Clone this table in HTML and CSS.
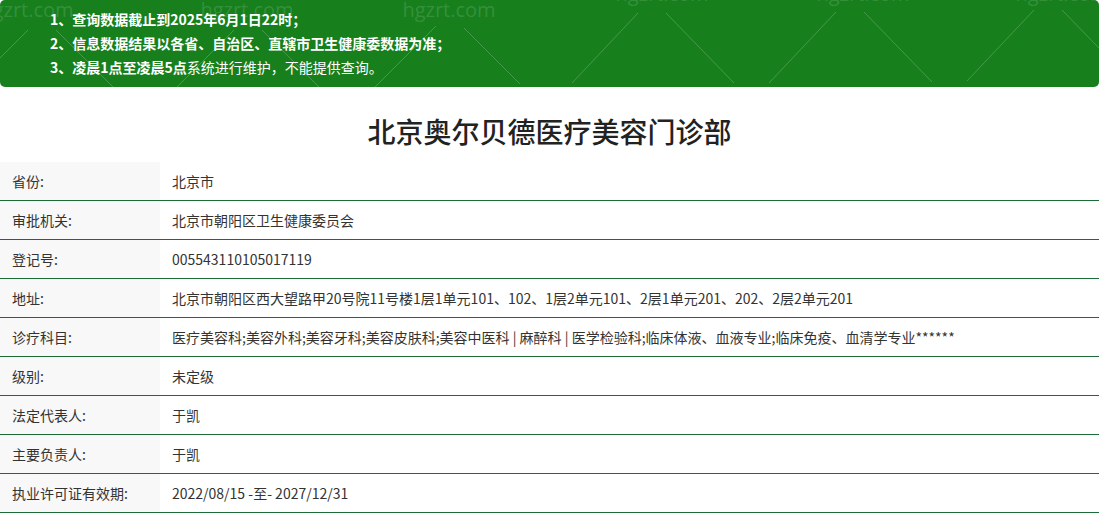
FILE: index.html
```html
<!DOCTYPE html>
<html lang="zh-CN">
<head>
    <meta charset="UTF-8">
    <meta name="viewport" content="width=device-width, initial-scale=1.0">
    <title>北京奥尔贝德医疗美容门诊部</title>
    <link rel="stylesheet" href="styles.css">
</head>
<body>
    <div class="page">
        <div class="notice">
            <svg class="watermark" width="1099" height="87" viewBox="0 0 1099 87" aria-hidden="true">
                <g class="wm-text">
                    <text x="27" y="17">hgzrt.com</text>
                    <text x="247" y="17">hgzrt.com</text>
                    <text x="449" y="17">hgzrt.com</text>
                    <text x="662" y="1">hgzrt.com</text>
                    <text x="863" y="1">hgzrt.com</text>
                    <text x="1062" y="1">hgzrt.com</text>
                </g>
                <g class="wm-lines">
                    <line x1="28" y1="30" x2="-42" y2="100"/>
                    <line x1="56" y1="30" x2="126" y2="100"/>
                    <line x1="234" y1="30" x2="164" y2="100"/>
                    <line x1="262" y1="30" x2="332" y2="100"/>
                    <line x1="436" y1="26" x2="366" y2="96"/>
                    <line x1="464" y1="28" x2="520" y2="84"/>
                    <line x1="638" y1="13" x2="572" y2="83"/>
                    <line x1="666" y1="13" x2="734" y2="83"/>
                    <line x1="836" y1="12" x2="769" y2="83"/>
                    <line x1="864" y1="12" x2="932" y2="82"/>
                    <line x1="1034" y1="10" x2="967" y2="81"/>
                    <line x1="1062" y1="10" x2="1130" y2="80"/>
                </g>
            </svg>
            <ul class="notice-list">
                <li>1、查询数据截止到2025年6月1日22时；</li>
                <li>2、信息数据结果以各省、自治区、直辖市卫生健康委数据为准；</li>
                <li>3、凌晨1点至凌晨5点<span class="plain">系统进行维护，不能提供查询。</span></li>
            </ul>
        </div>

        <h1 class="title">北京奥尔贝德医疗美容门诊部</h1>

        <table class="info">
            <tr><th>省份:</th><td>北京市</td></tr>
            <tr><th>审批机关:</th><td>北京市朝阳区卫生健康委员会</td></tr>
            <tr><th>登记号:</th><td>005543110105017119</td></tr>
            <tr><th>地址:</th><td>北京市朝阳区西大望路甲20号院11号楼1层1单元101、102、1层2单元101、2层1单元201、202、2层2单元201</td></tr>
            <tr><th>诊疗科目:</th><td>医疗美容科;美容外科;美容牙科;美容皮肤科;美容中医科 | 麻醉科 | 医学检验科;临床体液、血液专业;临床免疫、血清学专业******</td></tr>
            <tr><th>级别:</th><td>未定级</td></tr>
            <tr><th>法定代表人:</th><td>于凯</td></tr>
            <tr><th>主要负责人:</th><td>于凯</td></tr>
            <tr><th>执业许可证有效期:</th><td>2022/08/15 -至- 2027/12/31</td></tr>
        </table>
    </div>
</body>
</html>
```

FILE: styles.css
```css
body {
    margin: 0;
    background-color: #ffffff;
    color: #333333;
    font-family: "Noto Sans CJK SC", "Noto Sans", sans-serif;
    font-size: 14px;
}
.page {
    width: 1099px;
}
.notice {
    position: relative;
    height: 87px;
    box-sizing: border-box;
    padding-top: 7px;
    background-color: #17801d;
    border-radius: 5px;
    overflow: hidden;
    color: #ffffff;
}
.watermark {
    position: absolute;
    top: 0;
    left: 0;
}
.wm-text text {
    font-family: "Open Sans", sans-serif;
    font-size: 20px;
    fill: rgba(255, 255, 255, 0.14);
    text-anchor: middle;
}
.wm-lines line {
    stroke: rgba(255, 255, 255, 0.2);
    stroke-width: 1;
}
.notice-list {
    position: relative;
    list-style: none;
    margin: 0;
    padding: 0 0 0 50px;
}
.notice-list li {
    line-height: 24px;
    font-weight: bold;
}
.notice-list .plain {
    font-weight: normal;
}
.title {
    margin: 24px 0 11px;
    height: 40px;
    line-height: 40px;
    text-align: center;
    font-size: 28px;
    font-weight: 500;
    color: #222222;
}
.info {
    width: 100%;
    border-collapse: collapse;
}
.info th, .info td {
    height: 38px;
    padding: 0 12px;
    border-bottom: 1px solid #1c6b38;
    text-align: left;
    font-weight: normal;
    color: #333333;
    white-space: nowrap;
}
.info th {
    width: 136px;
    background-color: #f8f8f8;
}
```
